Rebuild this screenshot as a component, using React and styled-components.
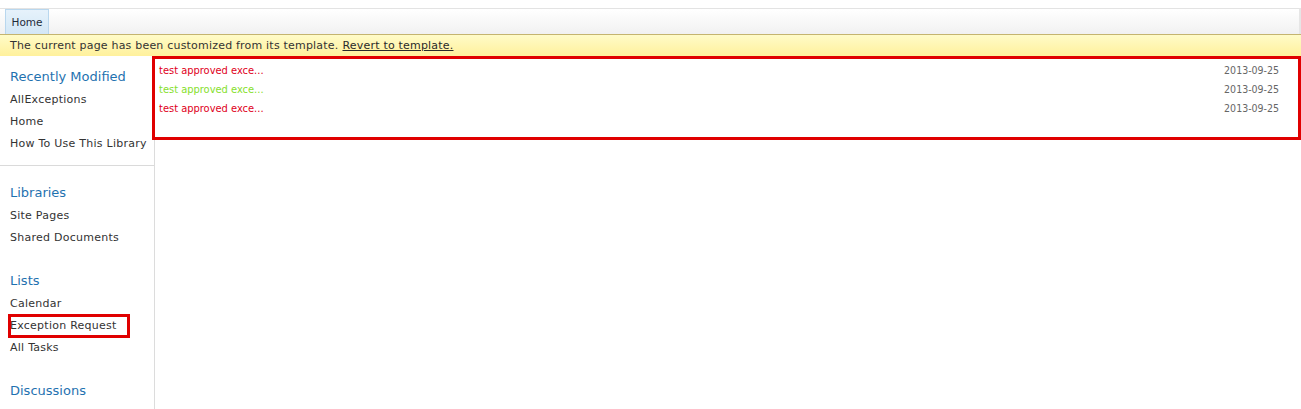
import React from "react";
import styled, { createGlobalStyle } from "styled-components";

const Global = createGlobalStyle`
  html, body {
    margin: 0;
    padding: 0;
    background: #fff;
    overflow: hidden;
  }
  body {
    font-family: "DejaVu Sans", Verdana, sans-serif;
    color: #333;
  }
`;

const Page = styled.div`
  width: 1301px;
  height: 409px;
  overflow: hidden;
  display: flex;
  flex-direction: column;
`;

const TopBar = styled.div`
  margin-top: 8px;
  height: 26px;
  border-top: 1px solid #e3e3e3;
  border-right: 2px solid #e6e6e6;
  background: linear-gradient(#ffffff, #f1f1f1);
  display: flex;
  align-items: stretch;
  padding-left: 5px;
  box-sizing: border-box;
`;

const Tab = styled.div`
  width: 44px;
  box-sizing: border-box;
  background: linear-gradient(#e6f2fb, #d3e7f6);
  border: 1px solid #b9d7ee;
  border-bottom: none;
  font-size: 10.5px;
  color: #1d2a3a;
  display: flex;
  align-items: center;
  justify-content: center;
`;

const Notice = styled.div`
  height: 22px;
  box-sizing: border-box;
  border-top: 1px solid #c4b46f;
  background: linear-gradient(#fffbc8, #fff19c);
  font-size: 11px;
  letter-spacing: 0.2px;
  color: #333;
  display: flex;
  align-items: center;
  padding-left: 10px;
  gap: 4px;
`;

const NoticeLink = styled.span`
  text-decoration: underline;
  color: #2a2a2a;
`;

const Body = styled.div`
  display: flex;
  flex: 1;
  min-height: 0;
`;

const Nav = styled.nav`
  width: 155px;
  flex-shrink: 0;
  box-sizing: border-box;
  border-right: 1px solid #dcdcdc;
  padding-top: 11px;
`;

const NavGroup = styled.div`
  padding: 0 0 0 10px;
  margin-bottom: ${(p) => p.$gap}px;
  border-bottom: ${(p) => (p.$divider ? "1px solid #dadada" : "none")};
  padding-bottom: ${(p) => (p.$divider ? 10 : 0)}px;
`;

const NavHeading = styled.div`
  font-size: 13px;
  color: #1f72b0;
  height: 20px;
  line-height: 20px;
  margin-bottom: 2px;
`;

const NavItem = styled.div`
  font-size: 11px;
  letter-spacing: 0.25px;
  color: #333;
  height: 22px;
  line-height: 22px;
  white-space: nowrap;
  outline: ${(p) => (p.$marked ? "3px solid #e00000" : "none")};
  outline-offset: -2px;
  width: ${(p) => (p.$marked ? "120px" : "auto")};
  margin-left: ${(p) => (p.$marked ? "-1px" : "0")};
  padding-left: ${(p) => (p.$marked ? "1px" : "0")};
  box-sizing: border-box;
`;

const Main = styled.main`
  flex: 1;
  margin-left: -3px;
`;

const ListBox = styled.div`
  height: 84px;
  box-sizing: border-box;
  border: 3px solid #e00000;
  padding: 2px 19px 0 4px;
`;

const Row = styled.div`
  display: flex;
  justify-content: space-between;
  align-items: center;
  height: 19px;
  line-height: 19px;
  font-family: "DejaVu Sans Condensed", "DejaVu Sans", sans-serif;
  font-size: 10.5px;
`;

const Title = styled.span`
  color: ${(p) => p.$tone};
  font-size: 11px;
`;

const Date = styled.span`
  color: #666;
`;

const groups = [
  {
    title: "Recently Modified",
    items: ["AllExceptions", "Home", "How To Use This Library"],
    divider: true,
    gap: 17,
  },
  { title: "Libraries", items: ["Site Pages", "Shared Documents"], gap: 22 },
  { title: "Lists", items: ["Calendar", "Exception Request", "All Tasks"], gap: 22 },
  { title: "Discussions", items: ["Team Discussion"], gap: 0 },
];

const rows = [
  { title: "test approved exce...", tone: "#e0001b", date: "2013-09-25" },
  { title: "test approved exce...", tone: "#86e02c", date: "2013-09-25" },
  { title: "test approved exce...", tone: "#e0001b", date: "2013-09-25" },
];

export default function App() {
  return (
    <Page>
      <Global />
      <TopBar>
        <Tab>Home</Tab>
      </TopBar>
      <Notice>
        The current page has been customized from its template.
        <NoticeLink>Revert to template.</NoticeLink>
      </Notice>
      <Body>
        <Nav>
          {groups.map((g) => (
            <NavGroup key={g.title} $divider={g.divider} $gap={g.gap}>
              <NavHeading>{g.title}</NavHeading>
              {g.items.map((it) => (
                <NavItem key={it} $marked={it === "Exception Request"}>
                  {it}
                </NavItem>
              ))}
            </NavGroup>
          ))}
        </Nav>
        <Main>
          <ListBox>
            {rows.map((r, i) => (
              <Row key={i}>
                <Title $tone={r.tone}>{r.title}</Title>
                <Date>{r.date}</Date>
              </Row>
            ))}
          </ListBox>
        </Main>
      </Body>
    </Page>
  );
}
